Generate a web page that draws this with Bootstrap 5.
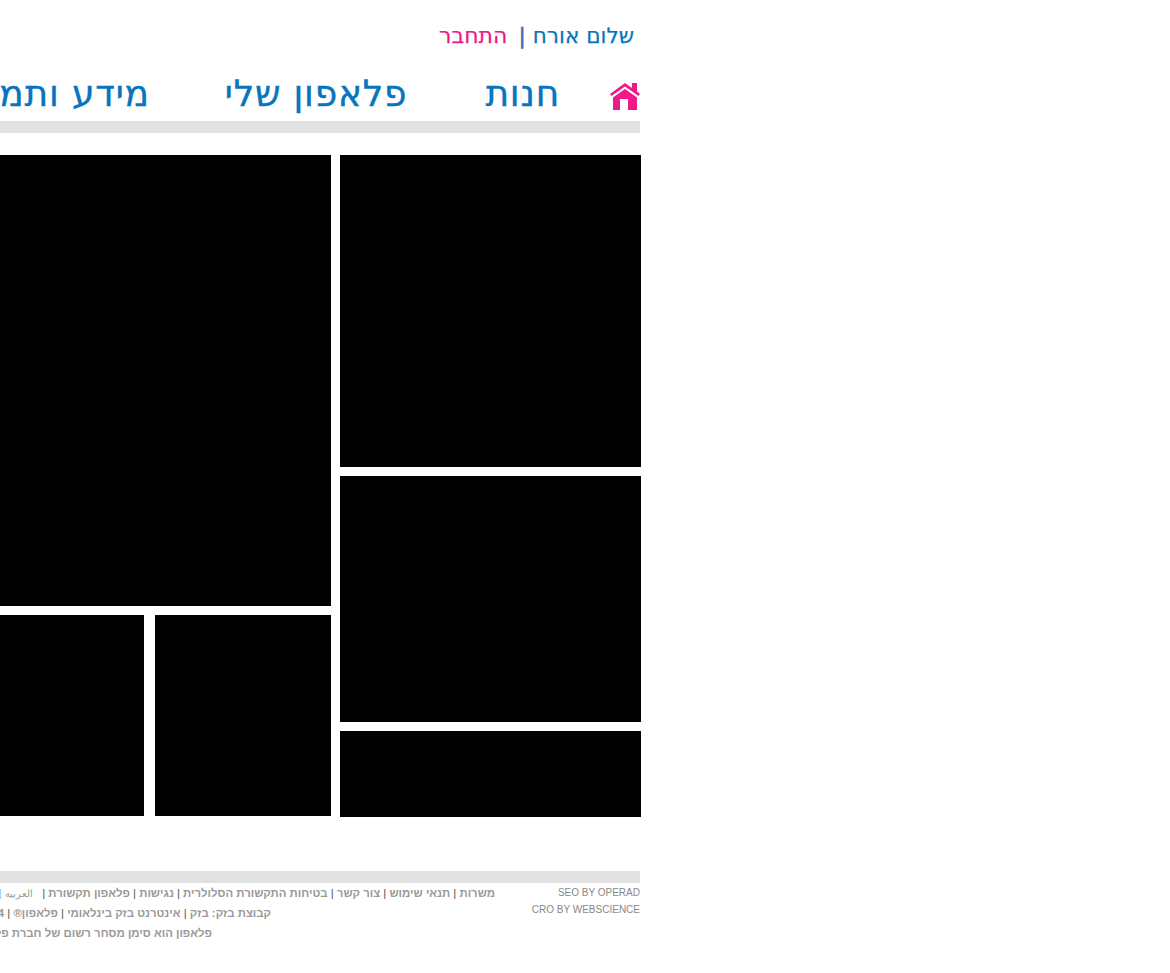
<!doctype html>
<html lang="he" dir="rtl">
<head>
<meta charset="utf-8">
<title>פלאפון</title>
<link href="https://cdn.jsdelivr.net/npm/bootstrap@5.3.0/dist/css/bootstrap.min.css" rel="stylesheet">
<style>
html,body{background:#fff;overflow:hidden;height:973px}
.site-wrap{width:641px;height:973px;overflow:hidden;margin-left:auto;margin-right:529px;direction:rtl;font-family:"Liberation Sans",Arial,sans-serif}
.top-line{height:21px;margin-top:25px;padding-right:7px;font-family:"DejaVu Sans",sans-serif;font-size:21.6px;line-height:21px;color:#0675bd;white-space:nowrap;-webkit-text-stroke:.25px currentColor}
.top-sep{color:#3f6fb5;margin:0 7px 0 11px;-webkit-text-stroke:.6px #3f6fb5}
.top-login{color:#ed1a8c;text-decoration:none;font-size:22px}
.main-menu{height:75px;padding-right:1px;font-family:"DejaVu Sans",sans-serif;font-size:36px;letter-spacing:.8px;line-height:50px;white-space:nowrap;align-items:flex-start;padding-top:23px;-webkit-text-stroke:.4px #0675bd}
.main-menu a{color:#0675bd;text-decoration:none}
.home-icon{width:30px;height:27px;margin-top:14px;margin-left:50px;flex:none}
.gap-shop{margin-left:78px}
.gap-mine{margin-left:75px}
.grey-bar{height:12px;background:#e1e1e1;width:640px;flex:none;margin-right:1px}
.tiles{margin-top:22px;height:716px;width:1000px;gap:9px}
.tile{background:#000}
.col-r{width:301px;flex:none;gap:9px}
.col-l{width:690px;flex:none;gap:9px}
.tile-a{height:312px}.tile-b{height:246px}.tile-c{height:86px}
.tile-d{height:451px}
.sub-row{gap:11px;height:201px}
.tile-e{width:176px;flex:none}.tile-f{width:503px;flex:none}
.foot{height:70px;width:1000px;font-size:11.4px;font-weight:700;color:#999;white-space:nowrap;margin-right:1px}
.credits{width:145px;flex:none;font-size:10px;font-weight:400;color:#888;text-align:right;direction:ltr;line-height:17px;padding-top:1px}
.legal{line-height:20px}
.legal>div{height:20px}
.legal a{color:#999;text-decoration:none}
.legal .b{color:#555;font-weight:400}
.ar{font-weight:400;font-size:9.6px;margin:0 9px 0 4px}
.line-two{margin-right:224px}
.line-three{margin-right:283px}
</style>
</head>
<body class="m-0">
<div class="site-wrap">
  <div class="top-line"><span>שלום אורח</span><span class="top-sep">|</span><a class="top-login" href="#">התחבר</a></div>
  <nav class="main-menu d-flex">
    <svg class="home-icon" viewBox="0 0 30 27" aria-hidden="true"><path fill="#ed1a8c" d="M15 0 22 5V0H27V8.500L30 11 28.500 13 15 3.500 1.500 13 0 11ZM15 6 27 14.500V27H18V16H10V27H3V14.500Z"/></svg>
    <a class="gap-shop" href="#">חנות</a>
    <a class="gap-mine" href="#">פלאפון שלי</a>
    <a href="#">מידע ותמיכה</a>
  </nav>
  <div class="grey-bar"></div>
  <div class="tiles d-flex">
    <div class="col-r d-flex flex-column">
      <div class="tile tile-a"></div><div class="tile tile-b"></div><div class="tile tile-c"></div>
    </div>
    <div class="col-l d-flex flex-column">
      <div class="tile tile-d"></div>
      <div class="sub-row d-flex"><div class="tile tile-e"></div><div class="tile tile-f"></div></div>
    </div>
  </div>
  <div class="grey-bar"></div>
  <div class="foot d-flex">
    <div class="credits"><div>SEO BY OPERAD</div><div>CRO BY WEBSCIENCE</div></div>
    <div class="legal">
      <div><a href="#">משרות</a> <span class="b">|</span> <a href="#">תנאי שימוש</a> <span class="b">|</span> <a href="#">צור קשר</a> <span class="b">|</span> <a href="#">בטיחות התקשורת הסלולרית</a> <span class="b">|</span> <a href="#">נגישות</a> <span class="b">|</span> <a href="#">פלאפון תקשורת</a> <span class="b">|</span><a class="ar" href="#">العربيه</a><span class="b">|</span></div>
      <div class="line-two">קבוצת בזק: בזק <span class="b">|</span> אינטרנט בזק בינלאומי <span class="b">|</span> פלאפון® <span class="b">|</span> 2014</div>
      <div class="line-three">פלאפון הוא סימן מסחר רשום של חברת פלאפון תקשורת בע"מ</div>
    </div>
  </div>
</div>
<script src="https://cdn.jsdelivr.net/npm/bootstrap@5.3.0/dist/js/bootstrap.bundle.min.js"></script>
</body>
</html>
